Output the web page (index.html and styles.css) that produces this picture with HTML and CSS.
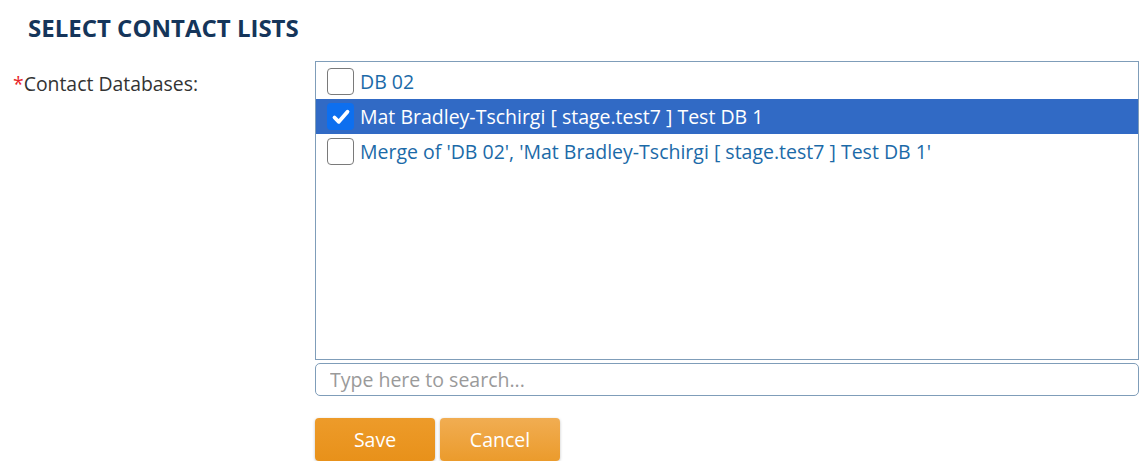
FILE: index.html
```html
<!DOCTYPE html>
<html>
<head>
<meta charset="utf-8">
<link rel="stylesheet" href="styles.css">
</head>
<body>
<h2 class="title">SELECT CONTACT LISTS</h2>
<div class="form-row">
  <div class="label"><span class="req">*</span>Contact Databases:</div>
  <div class="field">
    <div class="listbox">
      <div class="item"><span class="cb"></span><span class="txt">DB 02</span></div>
      <div class="item selected"><span class="cb checked"><svg viewBox="0 0 20 20" width="20" height="20"><path d="M3.5 10.5 L7.8 14.8 L16.5 4.8" fill="none" stroke="#fff" stroke-width="3.8" stroke-linecap="round" stroke-linejoin="round"/></svg></span><span class="txt">Mat Bradley-Tschirgi [ stage.test7 ] Test DB 1</span></div>
      <div class="item"><span class="cb"></span><span class="txt">Merge of 'DB 02', 'Mat Bradley-Tschirgi [ stage.test7 ] Test DB 1'</span></div>
    </div>
    <input class="search" type="text" placeholder="Type here to search...">
    <div class="buttons">
      <button class="btn save">Save</button>
      <button class="btn cancel">Cancel</button>
    </div>
  </div>
</div>
</body>
</html>
```
FILE: styles.css
```css
html, body {
  margin: 0;
  padding: 0;
  background: #fff;
  font-family: "Open Sans", "Liberation Sans", sans-serif;
}
.title {
  margin: 0;
  padding: 13px 0 0 28px;
  height: 47px;
  box-sizing: border-box;
  font-size: 24px;
  line-height: 30px;
  font-weight: 700;
  color: #15355a;
}
.form-row {
  display: grid;
  grid-template-columns: 315px 1fr;
  margin-top: 14px;
  margin-right: 8px;
}
.label {
  padding: 10px 0 0 13px;
  font-size: 19.4px;
  line-height: 26px;
  color: #333;
}
.req { color: #e8262b; }
.listbox {
  border: 1px solid #7f9db9;
  height: 299px;
  box-sizing: border-box;
  padding-top: 1px;
}
.item {
  display: flex;
  align-items: center;
  height: 35px;
  padding-left: 11px;
  font-size: 19.5px;
  color: #1b6aa8;
}
.item:first-child { height: 36px; }
.item.selected {
  background: #316ac5;
  color: #fff;
}
.cb {
  width: 27px;
  height: 27px;
  box-sizing: border-box;
  border: 1.5px solid #7a7a7a;
  border-radius: 4px;
  background: #fff;
  margin-right: 6px;
  display: flex;
  align-items: center;
  justify-content: center;
  flex: none;
}
.cb.checked {
  background: #0d6fef;
  border: none;
}
.txt { white-space: nowrap; }
.search {
  display: block;
  width: 100%;
  box-sizing: border-box;
  margin-top: 3px;
  height: 33px;
  border: 1px solid #7f9db9;
  border-radius: 5px;
  padding: 0 14px;
  font-family: "Open Sans", sans-serif;
  font-size: 19.5px;
  color: #333;
  outline: none;
}
.search::placeholder { color: #9a9a9a; }
.buttons {
  display: flex;
  gap: 5px;
  margin-top: 22px;
}
.btn {
  width: 120px;
  height: 43px;
  border: none;
  border-radius: 4px;
  color: #fff;
  font-family: "Open Sans", sans-serif;
  font-size: 19.5px;
  box-shadow: 0 1px 3px rgba(0,0,0,0.25);
}
.save {
  background: linear-gradient(#ed9b2a, #e8911a);
}
.cancel {
  background: linear-gradient(#f1ad52, #eb9b2c);
}
```
